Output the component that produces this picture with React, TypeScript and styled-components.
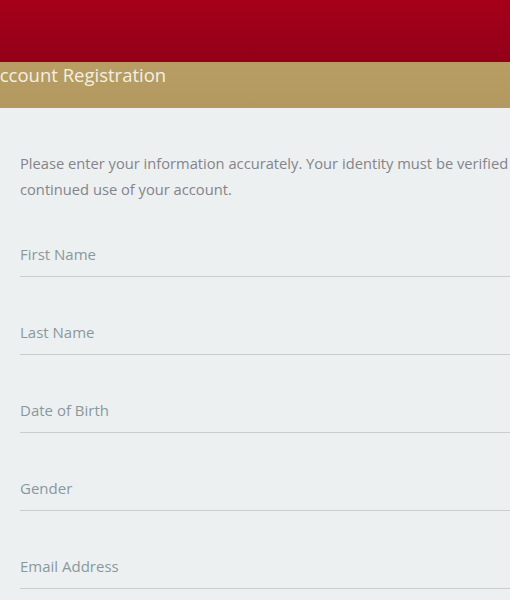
import React from 'react'
import styled, { createGlobalStyle } from 'styled-components'

const GlobalStyle = createGlobalStyle`
  html, body {
    margin: 0;
    padding: 0;
    background: #ecf0f1;
    overflow: hidden;
  }
  body {
    font-family: 'Open Sans', 'Noto Sans', sans-serif;
  }
`

const Page = styled.div`
  width: 590px;
  min-height: 600px;
  background: #ecf0f1;
`

const TopBar = styled.header`
  height: 62px;
  background: linear-gradient(to bottom, #a60019, #920018);
`

const TitleBar = styled.div`
  height: 46px;
  background: linear-gradient(to bottom, #b89e64, #b3995f);
  color: #f4efe2;
  font-size: 18.5px;
  line-height: 26px;
  text-indent: -12px;
`

const Body = styled.main`
  padding: 42px 20px 0 20px;
`

const Intro = styled.p`
  margin: 0 0 -3px 0;
  font-size: 14.7px;
  line-height: 26px;
  color: #858489;
`

const Field = styled.div`
  padding: 45px 0 12px 0;
  border-bottom: 1px solid #c9cfd1;
`

const Label = styled.label`
  display: block;
  font-size: 15px;
  line-height: 20px;
  color: #8a989d;
`

const fields = ['First Name', 'Last Name', 'Date of Birth', 'Gender', 'Email Address']

export default function App() {
  return (
    <>
      <GlobalStyle />
      <Page>
        <TopBar />
        <TitleBar>Account Registration</TitleBar>
        <Body>
          <Intro>
            Please enter your information accurately. Your identity must be verified for
            continued use of your account.
          </Intro>
          {fields.map((f) => (
            <Field key={f}>
              <Label>{f}</Label>
            </Field>
          ))}
        </Body>
      </Page>
    </>
  )
}
